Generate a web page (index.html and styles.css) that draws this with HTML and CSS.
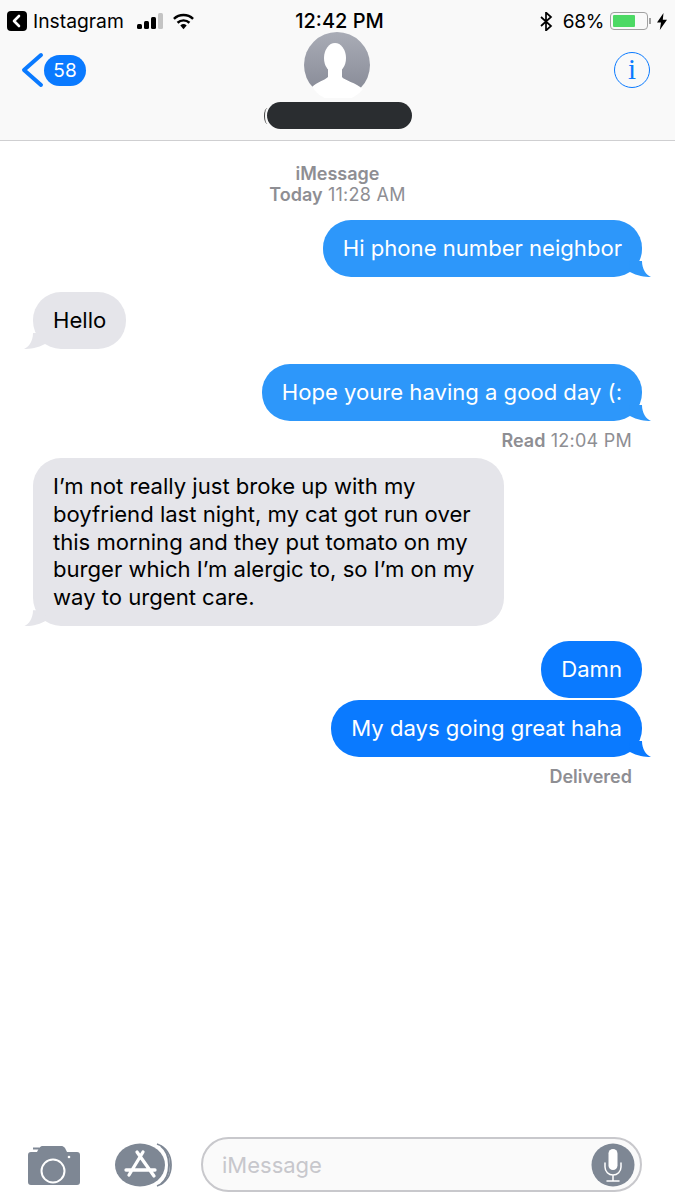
FILE: index.html
```html
<!DOCTYPE html>
<html lang="en">
<head>
  <meta charset="UTF-8">
  <meta name="viewport" content="width=device-width, initial-scale=1">
  <title>Messages</title>
  <link rel="stylesheet" href="styles.css">
</head>
<body>
  <div class="screen">
    <header class="top">
      <div class="status">
        <div class="status-left">
          <svg class="ig-back" viewBox="0 0 20 20"><rect width="20" height="20" rx="4" fill="#000"/><path d="M12 5 7 10l5 5" fill="none" stroke="#fff" stroke-width="2.6" stroke-linecap="round" stroke-linejoin="round"/></svg>
          <span class="app-name">Instagram</span>
          <svg class="signal" viewBox="0 0 26 17"><rect x="0" y="11" width="5" height="5" rx="1.5" fill="#000"/><rect x="7" y="8" width="5" height="8" rx="1.5" fill="#000"/><rect x="14" y="4" width="5" height="12" rx="1.5" fill="#000"/><rect x="21" y="0" width="5" height="16" rx="1.5" fill="#c4c4c4"/></svg>
          <svg class="wifi" viewBox="0 0 24 17"><path d="M12 16.500 8.700 12.800a4.800 4.800 0 0 1 6.600 0z" fill="#000"/><path d="M5.800 9.800a9 9 0 0 1 12.400 0M2 5.800a14.600 14.600 0 0 1 20 0" fill="none" stroke="#000" stroke-width="2.600"/></svg>
        </div>
        <div class="clock">12:42 PM</div>
        <div class="status-right">
          <svg class="bt" viewBox="0 0 13 19"><path d="M1 5l10 9-5 4.500V.500L11 5 1 14" fill="none" stroke="#000" stroke-width="1.700"/></svg>
          <span class="pct">68%</span>
          <div class="battery"><div class="battery-fill"></div></div>
          <div class="battery-nub"></div>
          <svg class="bolt" viewBox="0 0 10 17"><path d="M6.500 0 0 9.500h4L2.800 17 10 6.800H5.800z" fill="#000"/></svg>
        </div>
      </div>
      <div class="nav">
        <div class="back">
          <svg class="chevron" viewBox="0 0 24 36"><path d="M21 3 4 18l17 15" fill="none" stroke="#0a7aff" stroke-width="4" stroke-linecap="round" stroke-linejoin="round"/></svg>
          <span class="badge">58</span>
        </div>
        <div class="contact">
          <svg class="avatar" viewBox="0 0 66 66">
            <defs><linearGradient id="av" x1="0" y1="0" x2="0" y2="1"><stop offset="0" stop-color="#a9acb6"/><stop offset="1" stop-color="#858894"/></linearGradient></defs>
            <circle cx="33" cy="33" r="33" fill="url(#av)"/>
            <ellipse cx="31" cy="26" rx="11" ry="15" fill="#fff"/>
            <path d="M24 34h14v11c2 3 14 6 21 12A31.500 31.500 0 0 1 8 55c5-5 13-7 16-10z" fill="#fff"/>
          </svg>
          <div class="redacted"></div>
        </div>
        <div class="info"><span class="info-i">i</span></div>
      </div>
    </header>

    <main class="thread">
      <p class="stamp stamp-head"><strong>iMessage</strong><br><strong>Today</strong> 11:28 AM</p>
      <div class="msg me old first">Hi phone number neighbor</div>
      <div class="msg them">Hello</div>
      <div class="msg me old tight">Hope youre having a good day (:</div>
      <p class="stamp stamp-right"><strong>Read</strong> 12:04 PM</p>
      <div class="msg them long">I’m not really just broke up with my boyfriend last night, my cat got run over this morning and they put tomato on my burger which I’m alergic to, so I’m on my way to urgent care.</div>
      <div class="msg me no-tail">Damn</div>
      <div class="msg me tight">My days going great haha</div>
      <p class="stamp stamp-right"><strong>Delivered</strong></p>
    </main>

    <footer class="composer">
      <svg class="camera" viewBox="0 0 52 40">
        <path d="M5 2.500h6v2H5z" fill="#7e8794"/>
        <path d="M3 7h6l2-4c1-1 2-2 3-2h20c1 0 2 1 3 2l2 4h10c2 0 3 1 3 3v27c0 2-1 3-3 3H3c-2 0-3-1-3-3V10c0-2 1-3 3-3z" fill="#7e8794"/>
        <circle cx="25" cy="26" r="11.500" fill="none" stroke="#fff" stroke-width="2"/>
        <circle cx="41" cy="12" r="1.300" fill="#fff"/>
      </svg>
      <svg class="appstore" viewBox="0 0 58 44">
        <path d="M42 1c9 3 14 11 14 21s-5 18-14 21" fill="none" stroke="#7e8794" stroke-width="1.800"/>
        <path d="M46 3c5 4 8 11 8 19s-3 15-8 19" fill="none" stroke="#7e8794" stroke-width="2"/>
        <ellipse cx="25" cy="22" rx="25" ry="21.500" fill="#7e8794"/>
        <path d="M28 9 14 32M22 9l17 24M11 27h29" fill="none" stroke="#fff" stroke-width="3.300" stroke-linecap="round"/>
      </svg>
      <div class="field">
        <span class="placeholder">iMessage</span>
        <svg class="mic" viewBox="0 0 44 44">
          <circle cx="22" cy="22" r="21.500" fill="#7e8794"/>
          <rect x="17.500" y="6" width="9" height="21" rx="4.500" fill="#fff"/>
          <path d="M14 20v4a8 8 0 0 0 16 0v-4M22 32v6M16 38h12" fill="none" stroke="#fff" stroke-width="1.500" stroke-linecap="round"/>
        </svg>
      </div>
    </footer>
  </div>
</body>
</html>
```

FILE: styles.css
```css
* {
  box-sizing: border-box;
}
body {
  margin: 0;
  background-color: #fff;
  color: #000;
  font-family: Inter, "Liberation Sans", sans-serif;
}
.screen {
  width: 675px;
  height: 1200px;
  display: flex;
  flex-direction: column;
  overflow: hidden;
}

/* top bar */
.top {
  height: 141px;
  background-color: #f9f9f9;
  border-bottom: 1px solid #cfcfd1;
}
.status {
  height: 35px;
  padding: 7px 8px 0 7px;
  display: grid;
  grid-template-columns: 1fr auto 1fr;
  align-items: center;
}
.status-left,
.status-right {
  display: flex;
  align-items: center;
}
.status-right {
  justify-content: flex-end;
}
.ig-back {
  width: 20px;
  height: 20px;
  margin-right: 6px;
}
.app-name {
  font-size: 19.300px;
  margin-right: 13px;
}
.signal {
  width: 26px;
  height: 17px;
  margin-right: 9px;
}
.wifi {
  width: 23px;
  height: 17px;
}
.clock {
  font-size: 20px;
  font-weight: 500;
  padding-left: 5px;
}
.bt {
  width: 13px;
  height: 19px;
  margin-right: 10px;
}
.pct {
  font-size: 19px;
  letter-spacing: -0.300px;
  margin-right: 6px;
}
.battery {
  width: 38px;
  height: 18px;
  border: 1.5px solid #a0a0a0;
  border-radius: 4px;
  padding: 2px 12px 2px 2px;
}
.battery-fill {
  height: 100%;
  background-color: #4cd964;
  border-radius: 1px;
}
.battery-nub {
  width: 2px;
  height: 6px;
  background-color: #a0a0a0;
  margin: 0 6px 0 1px;
}
.bolt {
  width: 10px;
  height: 17px;
}
.nav {
  height: 105px;
  padding: 0 25px 0 20px;
  display: grid;
  grid-template-columns: 1fr auto 1fr;
}
.back {
  display: flex;
  align-items: center;
  height: 70px;
}
.chevron {
  width: 24px;
  height: 36px;
}
.badge {
  width: 42px;
  height: 31px;
  border-radius: 16px;
  background-color: #0a7aff;
  color: #fff;
  font-size: 19px;
  line-height: 31px;
  text-align: center;
}
.contact {
  display: flex;
  flex-direction: column;
  align-items: center;
  margin-left: 3px;
}
.avatar {
  width: 66px;
  height: 66px;
  display: block;
  margin-top: -3px;
}
.redacted {
  position: relative;
  width: 145px;
  height: 27px;
  margin-top: 4px;
  margin-left: 6px;
  border-radius: 14px;
  background-color: #2a2d30;
}
.redacted::before {
  content: "";
  position: absolute;
  left: -3px;
  top: 6px;
  width: 6px;
  height: 16px;
  border-left: 1.5px solid #444;
  border-radius: 50%;
}
.info {
  justify-self: end;
  width: 36px;
  height: 36px;
  margin-top: 17px;
  border: 1.5px solid #0a7aff;
  border-radius: 50%;
  color: #0a7aff;
  text-align: center;
}
.info-i {
  font-family: "Liberation Serif", serif;
  font-size: 29px;
  line-height: 33px;
}

/* messages */
.thread {
  flex: 1;
  display: flex;
  flex-direction: column;
  padding: 22px 33px 0;
}
.stamp {
  margin: 0;
  font-size: 18px;
  line-height: 21px;
  letter-spacing: 0.250px;
  color: #8e8e93;
}
.stamp strong {
  font-weight: 600;
  letter-spacing: 0;
}
.stamp-head {
  text-align: center;
  margin-bottom: 15px;
}
.stamp-right {
  text-align: right;
  padding-right: 10px;
  margin-top: 9px;
  margin-bottom: 7px;
}
.msg {
  position: relative;
  padding: 15px 20px 14.200px;
  border-radius: 28px;
  font-size: 22.080px;
  line-height: 27.800px;
  max-width: 471px;
  margin-bottom: 15px;
}
.msg::after {
  content: "";
  position: absolute;
  bottom: 0;
  width: 22px;
  height: 16px;
  background-color: inherit;
}
.me {
  align-self: flex-end;
  background-color: #0a7aff;
  color: #fff;
}
.me::after {
  right: -9px;
  clip-path: path("M13 0C13 8 17 14 22 16C16 16 8 15 1 11L0 0Z");
}
.old {
  background-color: #2d97fa;
}
.them {
  align-self: flex-start;
  background-color: #e5e5ea;
  color: #000;
}
.them::after {
  left: -9px;
  clip-path: path("M9 0C9 8 5 14 0 16C6 16 14 15 21 11L22 0Z");
}
.no-tail {
  margin-bottom: 2px;
}
.no-tail::after {
  display: none;
}
.tight {
  margin-bottom: 0;
}

/* input row */
.composer {
  height: 63px;
  padding: 0 33px 8px 28px;
  display: flex;
  align-items: center;
}
.camera {
  width: 52px;
  height: 40px;
  margin-right: 35px;
}
.appstore {
  width: 58px;
  height: 44px;
  margin-right: 28px;
}
.field {
  flex: 1;
  height: 55px;
  border: 2px solid #c8c8cc;
  border-radius: 28px;
  background-color: #fafafa;
  padding: 0 5px 0 19px;
  display: flex;
  align-items: center;
  justify-content: space-between;
}
.placeholder {
  font-size: 22px;
  color: #c7c7cc;
}
.mic {
  width: 44px;
  height: 44px;
}
```
